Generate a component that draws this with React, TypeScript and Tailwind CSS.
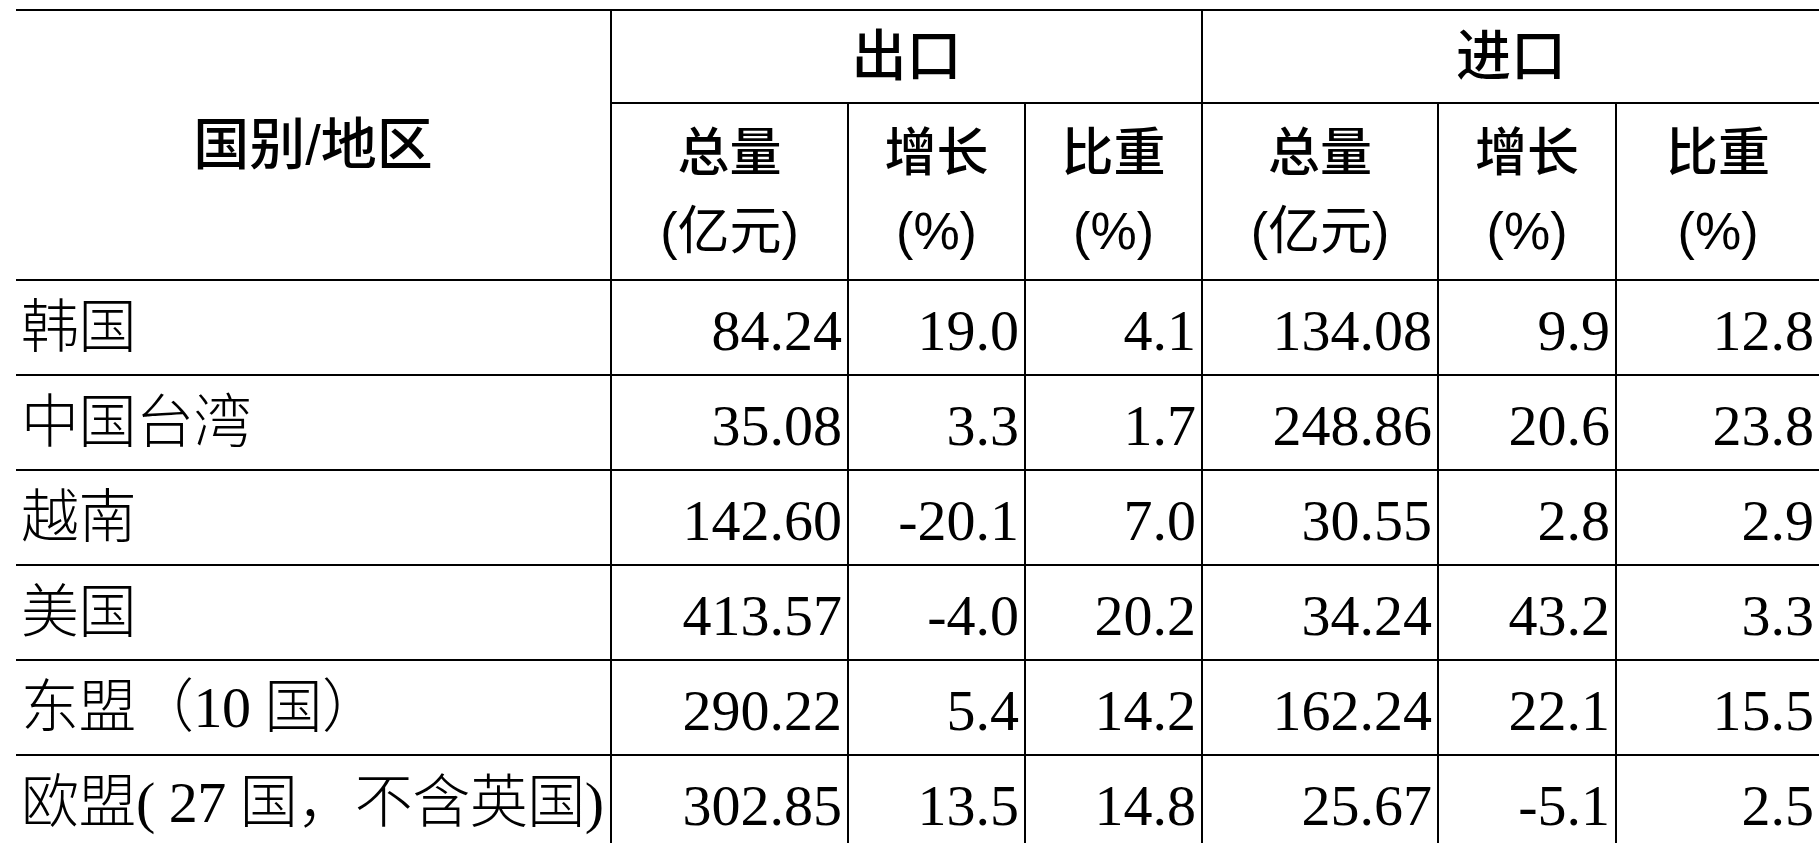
const rows: { name: string; key: string; values: string[] }[] = [
  { key: "kr", name: "韩国", values: ["84.24", "19.0", "4.1", "134.08", "9.9", "12.8"] },
  { key: "tw", name: "中国台湾", values: ["35.08", "3.3", "1.7", "248.86", "20.6", "23.8"] },
  { key: "vn", name: "越南", values: ["142.60", "-20.1", "7.0", "30.55", "2.8", "2.9"] },
  { key: "us", name: "美国", values: ["413.57", "-4.0", "20.2", "34.24", "43.2", "3.3"] },
  { key: "asean", name: "东盟（10 国）", values: ["290.22", "5.4", "14.2", "162.24", "22.1", "15.5"] },
  { key: "eu", name: "欧盟( 27 国，不含英国)", values: ["302.85", "13.5", "14.8", "25.67", "-5.1", "2.5"] },
];

const subHeads = [
  ["总量", "(亿元)"],
  ["增长", "(%)"],
  ["比重", "(%)"],
];

const headFont = "font-['Liberation_Sans','Noto_Sans_CJK_SC',sans-serif]";
const bodyFont = "font-['Liberation_Serif','Noto_Sans_CJK_SC',serif]";

export default function App() {
  return (
    <div className="h-screen w-screen overflow-hidden bg-white text-black">
      <div className="pl-[16px] pt-[9px]">
        <table className="table-fixed border-collapse w-[1803px]">
          <colgroup>
            <col className="w-[595px]" />
            <col className="w-[237px]" />
            <col className="w-[177px]" />
            <col className="w-[177px]" />
            <col className="w-[236px]" />
            <col className="w-[178px]" />
            <col className="w-[203px]" />
          </colgroup>
          <thead className={`${headFont} text-[52px] leading-[1.5]`}>
            <tr className="h-[93px] border-t-2 border-black">
              <th rowSpan={2} className="border-r-2 border-b-2 border-black text-center align-middle font-medium text-[56px]">
                国别/地区
              </th>
              <th colSpan={3} className="border-r-2 border-b-2 border-black text-center font-medium text-[55px]">
                出口
              </th>
              <th colSpan={3} className="border-b-2 border-black text-center font-medium text-[55px]">
                进口
              </th>
            </tr>
            <tr className="h-[177px]">
              {[0, 1].map((g) =>
                subHeads.map(([a, b], i) => (
                  <th
                    key={`${g}-${i}`}
                    className={`border-b-2 border-black text-center align-middle font-medium ${
                      g === 1 && i === 2 ? "" : "border-r-2"
                    }`}
                  >
                    <div>{a}</div>
                    <div className="font-normal">{b}</div>
                  </th>
                ))
              )}
            </tr>
          </thead>
          <tbody className={`${bodyFont} text-[58px]`}>
            {rows.map((r) => (
              <tr key={r.key} className="h-[95px]">
                <td className="border-r-2 border-b-2 border-black pl-[5px] whitespace-nowrap tracking-[-0.5px] font-light">
                  {r.name}
                </td>
                {r.values.map((v, i) => (
                  <td
                    key={i}
                    className={`border-b-2 border-black text-right pr-[5px] pt-[6px] whitespace-nowrap ${
                      i === 5 ? "" : "border-r-2"
                    }`}
                  >
                    {v}
                  </td>
                ))}
              </tr>
            ))}
          </tbody>
        </table>
      </div>
    </div>
  );
}
